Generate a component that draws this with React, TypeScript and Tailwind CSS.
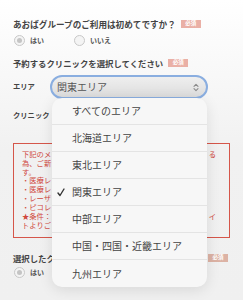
import React from "react";

const Badge = () => (
  <span className="inline-flex items-center justify-center w-[20px] h-[8px] bg-[#eab0a6] text-white text-[5.5px] leading-none font-bold">必須</span>
);

const Radio = ({ checked, label }: { checked?: boolean; label: string }) => (
  <div className="flex items-center gap-[5px]">
    <span className="w-[11px] h-[11px] rounded-full border border-[#c8c8c8] bg-[#f4f4f4] flex items-center justify-center">
      {checked && <span className="w-[5px] h-[5px] rounded-full bg-[#c4c4c4]" />}
    </span>
    <span className="text-[7px] font-bold text-[#555] leading-none">{label}</span>
  </div>
);

const items = ["すべてのエリア", "北海道エリア", "東北エリア", "関東エリア", "中部エリア", "中国・四国・近畿エリア", "九州エリア"];

const lines: [string, string][] = [
  ["下記のメ", "る"],
  ["為、ご新", ""],
  ["す。", ""],
  ["・医療レ", ""],
  ["・医療レ", ""],
  ["・レーザ", ""],
  ["・ピコレ", ""],
  ["★条件：", "イ"],
  ["トよりご", ""],
];

export default function App() {
  return (
    <div
      className="relative w-[243px] h-[300px] overflow-hidden bg-gradient-to-b from-white via-[#f1f1f1] to-[#f0f0f0]"
      style={{ fontFamily: '"Noto Sans CJK JP", "Noto Sans", sans-serif' }}
    >
      <div className="pl-[13px] pr-[13px] pt-[18px]">
        <div className="h-[12px] flex items-center gap-[5px]">
          <span className="text-[8.6px] font-bold text-[#444] leading-none whitespace-nowrap">あおばグループのご利用は初めてですか？</span>
          <Badge />
        </div>
        <div className="mt-[4px] h-[12px] flex items-center gap-[30px] pl-[1px]">
          <Radio checked label="はい" />
          <Radio label="いいえ" />
        </div>
        <div className="mt-[11px] h-[12px] flex items-center gap-[5px]">
          <span className="text-[8.4px] font-bold text-[#444] leading-none whitespace-nowrap">予約するクリニックを選択してください</span>
          <Badge />
        </div>
        <div className="mt-[6px] h-[24px] flex items-center">
          <span className="w-[37px] text-[7.3px] font-bold text-[#444] leading-none">エリア</span>
          <div className="w-[158px] h-[24px] rounded-full border-2 border-[#8aaee0] bg-gradient-to-b from-[#efefef] to-[#dcdcdc] flex items-center justify-between pl-[5px] pr-[7px]">
            <span className="text-[10px] text-[#555] leading-none">関東エリア</span>
            <svg width="6" height="9" viewBox="0 0 6 9" fill="none" stroke="#8a8a8a" strokeWidth="1.1" strokeLinecap="round" strokeLinejoin="round">
              <path d="M1 3.3 L3 1.3 L5 3.3" />
              <path d="M1 5.7 L3 7.7 L5 5.7" />
            </svg>
          </div>
        </div>
        <div className="mt-[11px] h-[12px] flex items-center">
          <span className="text-[7.3px] font-bold text-[#444] leading-none">クリニック</span>
        </div>
        <div className="mt-[21px] h-[95px] border-[1.5px] border-[#d5564a] pl-[8px] pr-[13px] pt-[6px]">
          {lines.map(([a, b], i) => (
            <div key={i} className="h-[8.9px] flex justify-between items-center text-[7.3px] leading-none text-[#d0483d] whitespace-nowrap">
              <span>{a}</span>
              <span>{b}</span>
            </div>
          ))}
        </div>
        <div className="mt-[14px] h-[12px] flex items-center justify-between pr-[2px]">
          <span className="text-[8.4px] font-bold text-[#444] leading-none whitespace-nowrap">選択したク</span>
          <span className="inline-flex items-center justify-center w-[20px] h-[8px] bg-[#dcb2a4] text-white text-[5.5px] leading-none font-bold">必須</span>
        </div>
        <div className="mt-[2px] h-[12px] flex items-center pl-[1px]">
          <Radio checked label="はい" />
        </div>
      </div>

      <div className="absolute left-[52px] top-[98px] w-[155px] rounded-[10px] bg-[#f7f7f7] shadow-[0_3px_14px_rgba(0,0,0,0.10)] overflow-hidden">
        {items.map((t, i) => (
          <div
            key={t}
            className={`relative h-[27px] flex items-center pl-[20px] text-[10px] text-[#444] leading-none ${i < items.length - 1 ? "border-b border-[#e4e4e4]" : ""}`}
          >
            {t === "関東エリア" && (
              <svg className="absolute left-[5px] top-[9px]" width="8" height="9" viewBox="0 0 8 9" fill="none" stroke="#333" strokeWidth="1.4" strokeLinecap="round" strokeLinejoin="round">
                <path d="M1 5 L3 7.5 L7 1" />
              </svg>
            )}
            {t}
          </div>
        ))}
      </div>
    </div>
  );
}
